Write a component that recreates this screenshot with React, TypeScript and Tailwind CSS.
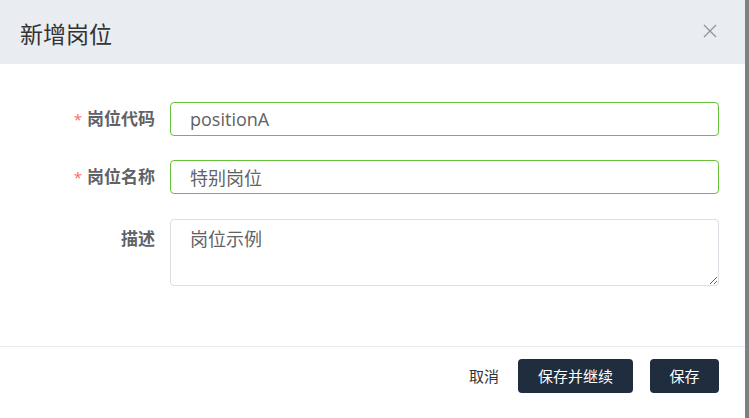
const font = { fontFamily: '"Open Sans", "Noto Sans CJK SC", sans-serif' }

function FormRow({
  label,
  required,
  children,
  top,
}: {
  label: string
  required?: boolean
  children: React.ReactNode
  top?: boolean
}) {
  return (
    <div className={`flex ${top ? 'items-start' : 'items-center'}`}>
      <label
        className={`flex h-[34px] w-[170px] shrink-0 items-center justify-end pr-[15px] text-[17px] font-bold text-[#606266] ${
          top ? 'mt-[3px]' : ''
        }`}
      >
        {required && <span className="mr-[5px] text-[15px] font-normal text-[#f56c6c]">*</span>}
        {label}
      </label>
      <div className="flex-1">{children}</div>
    </div>
  )
}

export default function App() {
  return (
    <div className="flex h-[418px] w-full overflow-hidden bg-[#808080]" style={font}>
      <div className="flex w-[745px] shrink-0 flex-col bg-white">
        <div className="flex h-16 items-center justify-between bg-[#e9ecf1] pl-5 pr-[28px] pt-1">
          <span className="text-[23px] text-[#333]">新增岗位</span>
          <svg width="14" height="14" viewBox="0 0 14 14" className="-mt-[7px]">
            <path d="M1 1 L13 13 M13 1 L1 13" stroke="#909399" strokeWidth="1.3" fill="none" />
          </svg>
        </div>

        <div className="flex flex-col gap-6 pb-[60px] pr-[26px] pt-[38px]">
          <FormRow label="岗位代码" required>
            <input
              className="h-[34px] w-full rounded border border-[#67c23a] pl-[19px] text-[18px] text-[#606266] outline-none"
              defaultValue="positionA"
            />
          </FormRow>
          <FormRow label="岗位名称" required>
            <input
              className="h-[34px] w-full rounded border border-[#67c23a] pl-[19px] text-[18px] text-[#606266] outline-none"
              defaultValue="特别岗位"
            />
          </FormRow>
          <div className="mt-px">
            <FormRow label="描述" top>
              <textarea
                className="block h-[67px] w-full rounded border border-[#dcdfe6] px-[19px] pb-[5px] pt-[7px] text-[18px] leading-[24px] text-[#606266] outline-none"
                defaultValue="岗位示例"
              />
            </FormRow>
          </div>
        </div>

        <div className="flex flex-1 items-start justify-end gap-[17px] border-t border-[#e8eaef] pr-[26px] pt-3">
          <button className="h-[34px] px-[2px] text-[15px] text-[#333]">取消</button>
          <button className="h-[34px] w-[115px] rounded bg-[#1f2d3f] text-[15px] text-white">保存并继续</button>
          <button className="h-[34px] w-[69px] rounded bg-[#1f2d3f] text-[15px] text-white">保存</button>
        </div>
      </div>
    </div>
  )
}
